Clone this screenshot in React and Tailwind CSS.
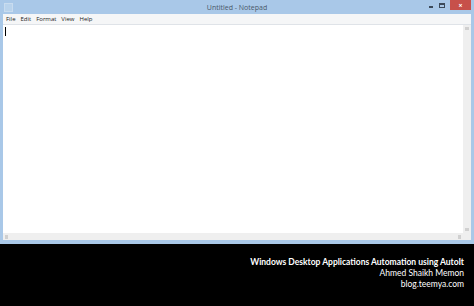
import React from "react";

const App = () => {
    return (
        <div className="w-[474px] h-[306px] bg-black flex flex-col overflow-hidden" style={{ fontFamily: "'Open Sans', 'Noto Sans', sans-serif" }}>
            {/* Notepad window */}
            <div className="h-[244px] bg-[#a9c8e8] flex flex-col px-[3px] pb-[4px]">
                {/* Title bar */}
                <div className="h-[14px] flex items-center relative">
                    <div className="w-[9px] h-[9px] ml-[1px] border border-[#c9dcef] bg-[#b9d3ec]" />
                    <div className="absolute left-0 right-0 top-[3.5px] text-center text-[7px] text-[#4a5868] leading-none">Untitled - Notepad</div>
                    <div className="flex-1" />
                    <div className="flex items-start h-full relative">
                        <div className="w-[11px] h-[10px] flex items-center justify-center">
                            <div className="w-[4px] h-[2px] bg-[#3c4a5a] mt-[3px]" />
                        </div>
                        <div className="w-[11px] h-[10px] flex items-center justify-center">
                            <div className="w-[6px] h-[5px] border border-[#3c4a5a] border-t-2" />
                        </div>
                        <div className="w-[21px] h-[10px] ml-[3px] bg-[#c7504a] flex items-center justify-center">
                            <span className="text-white text-[7px] leading-none font-bold">×</span>
                        </div>
                    </div>
                </div>
                {/* Menu bar */}
                <div className="h-[11px] bg-[#f5f6f7] border-b border-[#dfe3e8] flex items-center gap-[5px] pl-[3px] text-[6px] text-[#222] leading-none">
                    <span>File</span>
                    <span>Edit</span>
                    <span>Format</span>
                    <span>View</span>
                    <span>Help</span>
                </div>
                {/* Edit area */}
                <div className="flex-1 flex flex-col bg-white">
                    <div className="flex-1 flex">
                        <div className="flex-1 pl-[2px] pt-[2px]">
                            <div className="w-[1px] h-[9px] bg-black" />
                        </div>
                        <div className="w-[8px] bg-[#efefef] flex flex-col justify-between items-center py-[2px]">
                            <div className="w-[4px] h-[3px] bg-[#d0d0d0]" />
                            <div className="w-[4px] h-[3px] bg-[#d0d0d0]" />
                        </div>
                    </div>
                    <div className="h-[7px] bg-[#efefef] flex items-center justify-between px-[2px]">
                        <div className="w-[3px] h-[4px] bg-[#d0d0d0]" />
                        <div className="w-[3px] h-[4px] bg-[#d0d0d0] mr-[8px]" />
                    </div>
                </div>
            </div>
            {/* Caption */}
            <div className="flex-1 flex flex-col items-end pr-[10px] pt-[13px] text-white text-[8.5px] leading-[11px]" style={{ fontFamily: "Lato, 'Open Sans', sans-serif" }}>
                <span className="font-bold">Windows Desktop Applications Automation using AutoIt</span>
                <span>Ahmed Shaikh Memon</span>
                <span>blog.teemya.com</span>
            </div>
        </div>
    );
};

export default App;
